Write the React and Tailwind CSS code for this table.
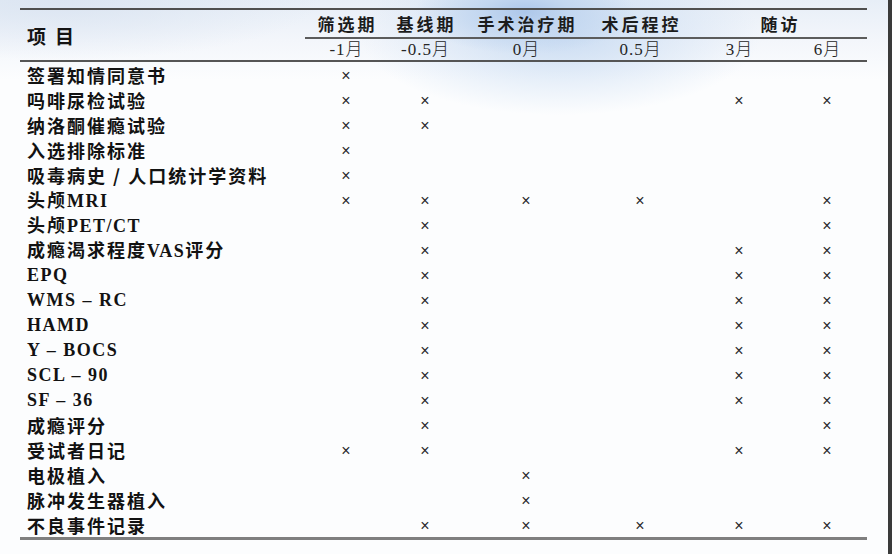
import React from "react";

const rows = [
  { label: [["c", "签署知情同意书"]], marks: [1] },
  { label: [["c", "吗啡尿检试验"]], marks: [1, 2, 5, 6] },
  { label: [["c", "纳洛酮催瘾试验"]], marks: [1, 2] },
  { label: [["c", "入选排除标准"]], marks: [1] },
  { label: [["c", "吸毒病史 / 人口统计学资料"]], marks: [1] },
  { label: [["c", "头颅"], ["e", "MRI"]], marks: [1, 2, 3, 4, 6] },
  { label: [["c", "头颅"], ["e", "PET/CT"]], marks: [2, 6] },
  { label: [["c", "成瘾渴求程度"], ["e", "VAS"], ["c", "评分"]], marks: [2, 5, 6] },
  { label: [["e", "EPQ"]], marks: [2, 5, 6] },
  { label: [["e", "WMS – RC"]], marks: [2, 5, 6] },
  { label: [["e", "HAMD"]], marks: [2, 5, 6] },
  { label: [["e", "Y – BOCS"]], marks: [2, 5, 6] },
  { label: [["e", "SCL – 90"]], marks: [2, 5, 6] },
  { label: [["e", "SF – 36"]], marks: [2, 5, 6] },
  { label: [["c", "成瘾评分"]], marks: [2, 6] },
  { label: [["c", "受试者日记"]], marks: [1, 2, 5, 6] },
  { label: [["c", "电极植入"]], marks: [3] },
  { label: [["c", "脉冲发生器植入"]], marks: [3] },
  { label: [["c", "不良事件记录"]], marks: [2, 3, 4, 5, 6] },
];

const cols = "grid grid-cols-[82px_76px_126px_102px_96px_80px]";

function Label({ parts }) {
  return (
    <div className="flex items-baseline pl-[7px] whitespace-pre text-[#121212]">
      {parts.map(([k, t], i) =>
        k === "c" ? (
          <span
            key={i}
            className="font-['Noto_Sans_CJK_SC',sans-serif] font-bold text-[18px] tracking-[2px] leading-none"
          >
            {t}
          </span>
        ) : (
          <span
            key={i}
            className="font-['Liberation_Serif',serif] font-bold text-[18px] tracking-[1.5px] leading-none"
          >
            {t}
          </span>
        )
      )}
    </div>
  );
}

const headFont =
  "font-['Noto_Sans_CJK_SC',sans-serif] font-bold text-[17px] tracking-[3px] leading-none text-[#1c1c1c] pl-[3px]";
const subFont =
  "font-['Liberation_Serif','Noto_Sans_CJK_SC',serif] font-light text-[17px] tracking-[1px] leading-none text-[#262626] pl-[1px]";

export default function App() {
  return (
    <div className="w-[892px] h-[554px] overflow-hidden bg-[#fcfdfe] bg-[image:radial-gradient(ellipse_110px_42px_at_525px_12px,#adc7ea_0%,#c3d7f0_40%,rgba(222,233,247,0)_100%),radial-gradient(ellipse_200px_80px_at_560px_35px,rgba(200,219,242,0.95)_0%,rgba(230,238,248,0)_100%),radial-gradient(ellipse_260px_60px_at_60px_0px,rgba(218,228,241,0.9)_0%,rgba(240,244,250,0)_100%),linear-gradient(to_bottom,#e7eef7_0px,#f3f6fb_40px,#fcfdfe_80px)] flex">
      <div className="ml-[20px] w-[847px] pt-[8px] flex flex-col">
        <div className="h-[2px] bg-[#4f4f4f]" />
        <div className="flex">
          <div className="w-[285px] flex items-center pl-[7px] text-[#141414] font-['Noto_Sans_CJK_SC',sans-serif] font-bold text-[19px] leading-none">
            <span>项</span>
            <span className="ml-[9px]">目</span>
          </div>
          <div className="flex-1 flex flex-col">
            <div className={`${cols} h-[27px] items-center text-center`}>
              <div className={headFont}>筛选期</div>
              <div className={headFont}>基线期</div>
              <div className={headFont}>手术治疗期</div>
              <div className={headFont}>术后程控</div>
              <div className={`${headFont} col-span-2`}>随访</div>
            </div>
            <div className="h-[2px] bg-[#5c5c5c]" />
            <div className={`${cols} h-[21px] items-center text-center`}>
              <div className={subFont}>-1月</div>
              <div className={subFont}>-0.5月</div>
              <div className={subFont}>0月</div>
              <div className={subFont}>0.5月</div>
              <div className={subFont}>3月</div>
              <div className={subFont}>6月</div>
            </div>
          </div>
        </div>
        <div className="h-[2px] bg-[#555555]" />
        <div className="flex flex-col">
          {rows.map((r, i) => (
            <div key={i} className="flex h-[25px] items-center">
              <div className="w-[285px]">
                <Label parts={r.label} />
              </div>
              <div className={`${cols} flex-1 items-center text-center`}>
                {[1, 2, 3, 4, 5, 6].map((c) => (
                  <div
                    key={c}
                    className="font-['Liberation_Sans',sans-serif] text-[16px] leading-none text-[#2a2a2a] pt-[3px]"
                  >
                    {r.marks.includes(c) ? "×" : ""}
                  </div>
                ))}
              </div>
            </div>
          ))}
        </div>
        <div className="h-[3px] bg-[#7f7f7f]" />
      </div>
      <div className="flex-1" />
      <div className="w-[4px] bg-[#3a3a3a]" />
    </div>
  );
}
